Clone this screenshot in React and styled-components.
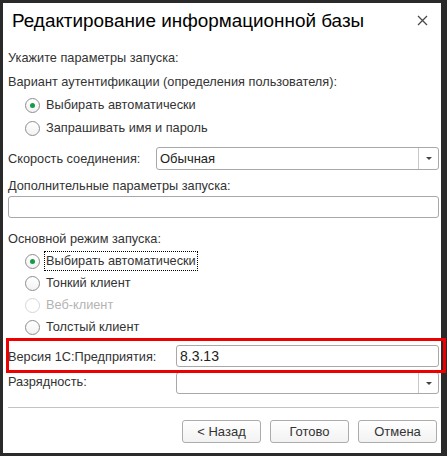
import React from "react";
import styled, { createGlobalStyle } from "styled-components";

const Global = createGlobalStyle`
  html, body { margin: 0; padding: 0; background: #2a2a2a; }
  body { font-family: "Liberation Sans", Arial, sans-serif; width: 447px; height: 456px; overflow: hidden; }
`;

const Page = styled.div`
  width: 447px;
  height: 456px;
  padding: 3px 0 0 3px;
  box-sizing: border-box;
`;

const Window = styled.div`
  position: relative;
  width: 438px;
  height: 450px;
  background: #fff;
  display: flex;
  flex-direction: column;
  box-sizing: border-box;
`;

const Header = styled.div`
  height: 36px;
  flex: none;
  display: flex;
  align-items: center;
  justify-content: space-between;
  padding: 0 9px 0 9px;
  box-sizing: border-box;
`;

const Title = styled.div`
  font-size: 18.9px;
  color: #000;
  white-space: nowrap;
`;

const Close = styled.svg`
  width: 11px;
  height: 11px;
  margin-right: 4px;
  margin-top: -2px;
`;

const Body = styled.div`
  display: flex;
  flex-direction: column;
  padding: 8px 2px 0 5px;
  font-size: 12.75px;
  color: #333;
`;

const Text = styled.div`
  height: ${(p) => p.h || 22}px;
  line-height: ${(p) => p.h || 22}px;
  margin-top: ${(p) => p.mt || 0}px;
  white-space: nowrap;
  flex: none;
`;

const RadioGroup = styled.div`
  display: flex;
  flex-direction: column;
  gap: ${(p) => p.gap || 0}px;
  margin-top: ${(p) => p.mt || 0}px;
  padding-left: 17px;
`;

const RadioRow = styled.div`
  height: 22px;
  display: flex;
  align-items: center;
  gap: 6px;
  color: ${(p) => (p.disabled ? "#b4b4b4" : "#333")};
`;

const Circle = styled.span`
  width: 15px;
  height: 15px;
  box-sizing: border-box;
  border-radius: 50%;
  border: 1px solid ${(p) => (p.disabled ? "#d6d6d6" : "#8e8e8e")};
  background: ${(p) => (p.disabled ? "#fff" : "linear-gradient(#ffffff, #f3f3f3)")};
  display: flex;
  align-items: center;
  justify-content: center;
  flex: none;
  &::after {
    content: "";
    display: ${(p) => (p.checked ? "block" : "none")};
    width: 5px;
    height: 5px;
    border-radius: 50%;
    background: #159a48;
  }
`;

const RadioLabel = styled.span`
  height: 18px;
  line-height: 18px;
  padding: 0 1px;
  margin-left: -1px;
  outline: ${(p) => (p.focused ? "1px dotted #000" : "none")};
  outline-offset: 0;
`;

const FieldRow = styled.div`
  display: flex;
  align-items: center;
  margin-top: ${(p) => p.mt || 0}px;
`;

const FieldLabel = styled.div`
  width: ${(p) => p.w}px;
  flex: none;
  white-space: nowrap;
  margin-top: ${(p) => p.lt || 0}px;
`;

const Input = styled.div`
  flex: 1 1 auto;
  min-width: 0;
  height: ${(p) => p.h || 22}px;
  box-sizing: border-box;
  border: 1px solid #a8a8a8;
  border-radius: 3px;
  background: #fff;
  display: flex;
  align-items: center;
  padding-left: 3px;
  font-size: ${(p) => p.fs || 13}px;
  color: #222;
  white-space: nowrap;
`;

const Select = styled(Input)`
  padding-right: 0;
`;

const SelectValue = styled.span`
  flex: 1;
`;

const DropButton = styled.span`
  width: 19px;
  height: 100%;
  border-left: 1px solid #c9c9c9;
  display: flex;
  align-items: center;
  justify-content: center;
  &::after {
    content: "";
    width: 0;
    height: 0;
    border-left: 3px solid transparent;
    border-right: 3px solid transparent;
    border-top: 3px solid #444;
  }
`;

const Separator = styled.div`
  height: 1px;
  flex: none;
  background: #c4c4c4;
  margin-top: 13px;
`;

const Buttons = styled.div`
  display: flex;
  justify-content: flex-end;
  gap: 9px;
  margin-top: 12px;
  padding-right: 2px;
`;

const Button = styled.div`
  width: 79px;
  height: 23px;
  box-sizing: border-box;
  border: 1px solid #acacac;
  border-radius: 3px;
  background: linear-gradient(#ffffff, #f2f2f2);
  display: flex;
  align-items: center;
  justify-content: center;
  font-size: 13px;
  color: #333;
`;

const Highlight = styled.div`
  position: absolute;
  left: 3px;
  top: 335px;
  width: 440px;
  height: 35px;
  box-sizing: border-box;
  border: 3px solid #ef0000;
  pointer-events: none;
`;

const Radio = ({ checked, disabled, focused, children }) => (
  <RadioRow disabled={disabled}>
    <Circle checked={checked} disabled={disabled} />
    <RadioLabel focused={focused}>{children}</RadioLabel>
  </RadioRow>
);

export default function App() {
  return (
    <>
      <Global />
      <Page>
        <Window>
          <Header>
            <Title>Редактирование информационной базы</Title>
            <Close viewBox="0 0 11 11">
              <path d="M1 1 L10 10 M10 1 L1 10" stroke="#4a4a4a" strokeWidth="1.3" fill="none" />
            </Close>
          </Header>
          <Body>
            <Text>Укажите параметры запуска:</Text>
            <Text mt={2}>Вариант аутентификации (определения пользователя):</Text>
            <RadioGroup mt={1} gap={1}>
              <Radio checked>Выбирать автоматически</Radio>
              <Radio>Запрашивать имя и пароль</Radio>
            </RadioGroup>
            <FieldRow mt={8}>
              <FieldLabel w={148}>Скорость соединения:</FieldLabel>
              <Select h={23}>
                <SelectValue>Обычная</SelectValue>
                <DropButton />
              </Select>
            </FieldRow>
            <Text mt={5} h={21}>Дополнительные параметры запуска:</Text>
            <Input h={22} />
            <Text mt={10}>Основной режим запуска:</Text>
            <RadioGroup>
              <Radio checked focused>Выбирать автоматически</Radio>
              <Radio>Тонкий клиент</Radio>
              <Radio disabled>Веб-клиент</Radio>
              <Radio>Толстый клиент</Radio>
            </RadioGroup>
            <FieldRow mt={7}>
              <FieldLabel w={168}>Версия 1С:Предприятия:</FieldLabel>
              <Input h={22} fs={14}>8.3.13</Input>
            </FieldRow>
            <FieldRow mt={5}>
              <FieldLabel w={168} lt={-3}>Разрядность:</FieldLabel>
              <Select h={22}>
                <SelectValue />
                <DropButton />
              </Select>
            </FieldRow>
            <Separator />
            <Buttons>
              <Button>&lt; Назад</Button>
              <Button>Готово</Button>
              <Button>Отмена</Button>
            </Buttons>
          </Body>
          <Highlight />
        </Window>
      </Page>
    </>
  );
}
